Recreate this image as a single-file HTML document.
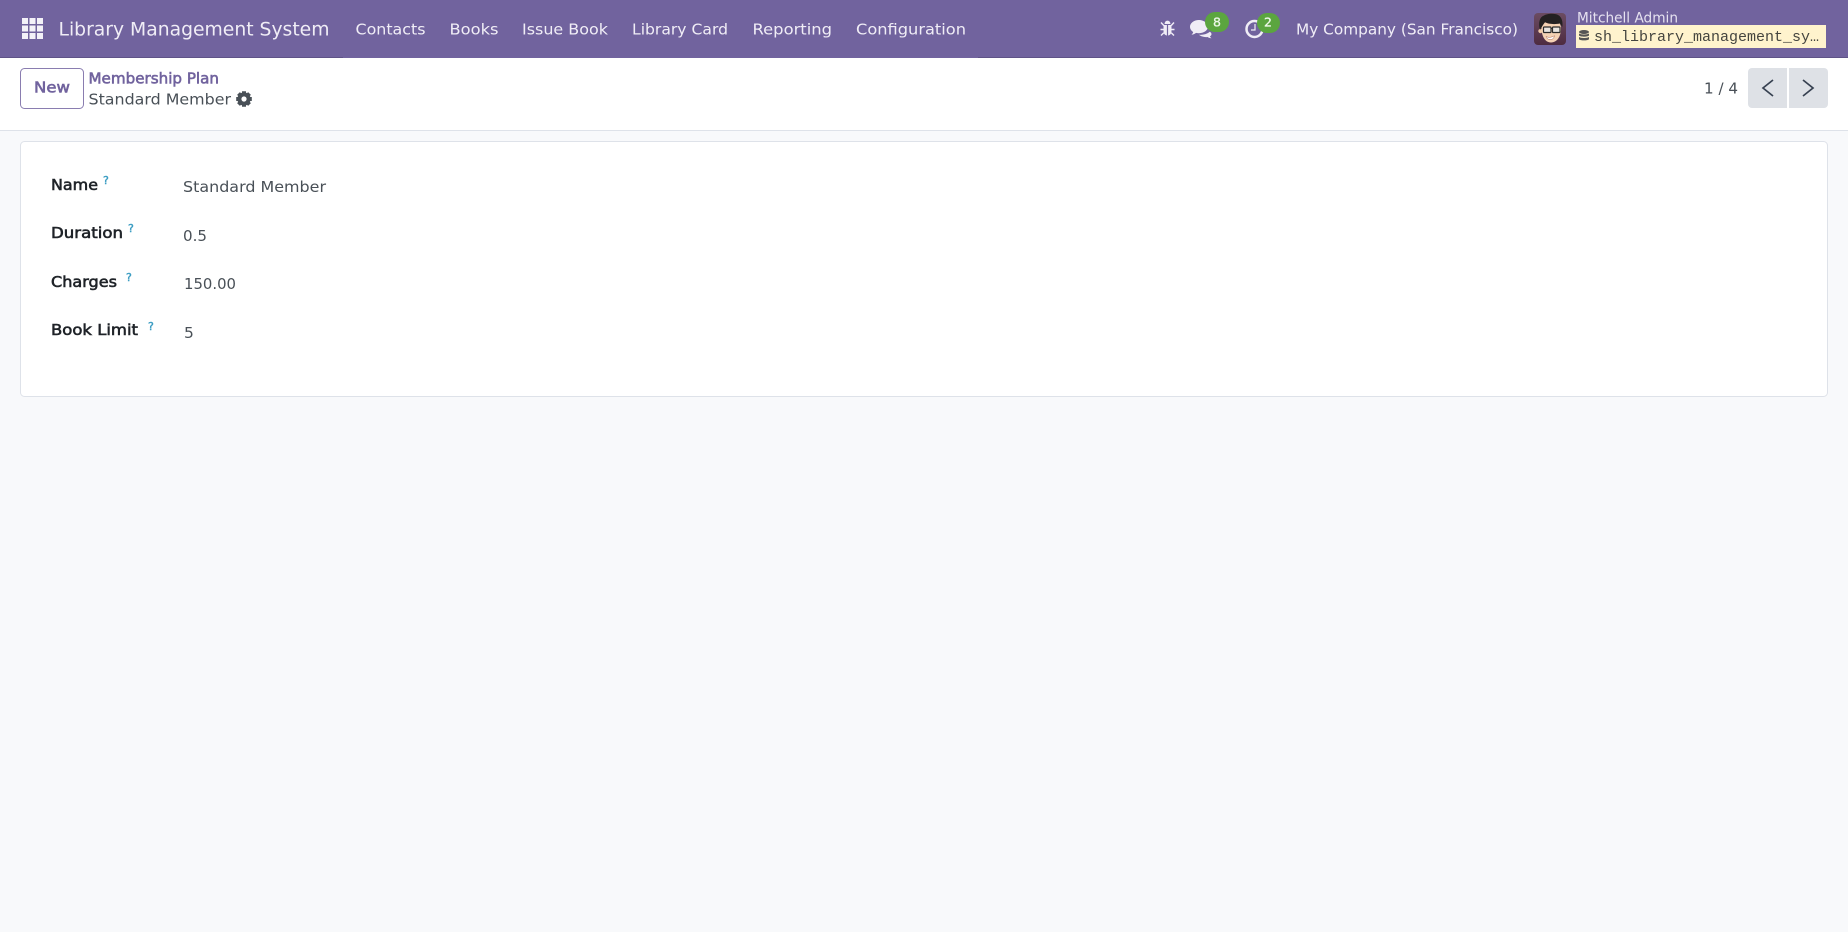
<!DOCTYPE html>
<html lang="en">
<head>
<meta charset="utf-8">
<title>Membership Plan</title>
<style>
html,body{margin:0;padding:0;width:1848px;height:932px;overflow:hidden;background:#f8f9fb}
svg{display:block;position:absolute;left:0;top:0}
text{font-family:"DejaVu Sans","Liberation Sans",sans-serif;white-space:pre}
.nav{fill:#f0edf6;font-size:15.5px}
.lab{fill:#1f2328;font-size:15.5px;stroke:#1f2328;stroke-width:.6px}
.val{fill:#495057;font-size:15.5px}
.q{fill:#3a9cc2;font-size:11px;stroke:#3a9cc2;stroke-width:.4px}
</style>
</head>
<body>
<svg width="1848" height="932" viewBox="0 0 1848 932" xmlns="http://www.w3.org/2000/svg">
<rect width="1848" height="932" fill="#f8f9fb"/>
<!-- navbar -->
<rect width="1848" height="58" fill="#71639e"/>
<rect y="57" width="343" height="1" fill="#5f5387"/>
<rect x="978" y="57" width="870" height="1" fill="#5f5387"/>
<!-- apps icon -->
<g fill="#f3f1f8">
<rect x="22" y="18" width="6" height="6"/><rect x="29.500" y="18" width="6" height="6"/><rect x="37" y="18" width="6" height="6"/>
<rect x="22" y="25.500" width="6" height="6"/><rect x="29.500" y="25.500" width="6" height="6"/><rect x="37" y="25.500" width="6" height="6"/>
<rect x="22" y="33" width="6" height="6"/><rect x="29.500" y="33" width="6" height="6"/><rect x="37" y="33" width="6" height="6"/>
</g>
<text x="58.500" y="35.500" fill="#f0edf6" font-size="18.800" textLength="271" lengthAdjust="spacingAndGlyphs">Library Management System</text>
<text class="nav" x="355.500" y="34.500" textLength="70" lengthAdjust="spacingAndGlyphs">Contacts</text>
<text class="nav" x="449.500" y="34.500" textLength="49" lengthAdjust="spacingAndGlyphs">Books</text>
<text class="nav" x="522" y="34.500" textLength="86" lengthAdjust="spacingAndGlyphs">Issue Book</text>
<text class="nav" x="632" y="34.500" textLength="96" lengthAdjust="spacingAndGlyphs">Library Card</text>
<text class="nav" x="752.500" y="34.500" textLength="79.500" lengthAdjust="spacingAndGlyphs">Reporting</text>
<text class="nav" x="856" y="34.500" textLength="110" lengthAdjust="spacingAndGlyphs">Configuration</text>
<!-- bug -->
<g fill="#f0edf6">
<path d="M1164.500 24a3 3.400 0 0 1 6 0z"/>
<path d="M1163.500 25h3.400v10.500c-2-.3-3.400-2-3.400-4.500zM1168.100 25h3.400v6c0 2.500-1.400 4.200-3.400 4.500z"/>
</g>
<path d="M1161 22.500l2.800 3M1174 22.500l-2.800 3M1160.500 29.500h3.500M1174.500 29.500h-3.500M1161 35.500l2.800-2.800M1174 35.500l-2.800-2.800" stroke="#f0edf6" stroke-width="1.400" fill="none"/>
<!-- chats -->
<path d="M1199 20c-5 0-9 3-9 6.800 0 2.200 1.300 4 3.200 5.300-.3 1-.9 1.800-1.700 2.600 1.800-.2 3.400-.8 4.600-1.800 1 .2 2 .3 2.900.3 5 0 9-3 9-6.400s-4-6.800-9-6.800z" fill="#f0edf6"/>
<path d="M1199 34.800c3.800.3 8-.6 10.800-3 1 .6 1.700 1.400 1.700 2.300 0 .9-.6 1.700-1.500 2.200.2.800.7 1.400 1.500 2-1.700-.1-3-.5-3.900-1.300-3.500.4-6.900-.6-8.600-2.200z" fill="#f0edf6"/>
<rect x="1205" y="12" width="24" height="20" rx="10" fill="#5ba53f"/>
<text x="1217" y="26.500" fill="#eef7ea" stroke="#eef7ea" stroke-width=".3" font-size="12.500" text-anchor="middle">8</text>
<!-- clock -->
<circle cx="1254.500" cy="29" r="8" fill="none" stroke="#f0edf6" stroke-width="2.500"/>
<path d="M1255 24v6h-4" fill="none" stroke="#f0edf6" stroke-width="1.200"/>
<rect x="1257" y="13" width="23" height="20" rx="10" fill="#5ba53f"/>
<text x="1268" y="26.500" fill="#eef7ea" stroke="#eef7ea" stroke-width=".3" font-size="12.500" text-anchor="middle">2</text>
<text class="nav" x="1296" y="34.500" textLength="222" lengthAdjust="spacingAndGlyphs">My Company (San Francisco)</text>
<!-- avatar -->
<defs><linearGradient id="av" x1="0" y1="0" x2="0" y2="1"><stop offset="0" stop-color="#6b4c62"/><stop offset="1" stop-color="#4e2c40"/></linearGradient></defs>
<rect x="1534" y="13" width="32" height="32" rx="4" fill="url(#av)"/>
<circle cx="1540.500" cy="31" r="2.200" fill="#f0c8a6"/>
<path d="M1541.500 27c-.3 8 3 15.500 9.500 15.500 6.500-.3 10.300-6.500 10-15.500l-2-6-14 .5z" fill="#f5d2b4"/>
<path d="M1540 30c-2-7-.5-13 4-14.500 3-2 11-2.500 14.500-.3 3.500 2.200 4.500 6.800 3.800 11.800l-2.300-3.500c-4.500 1-11.500.8-15-1.200-1.500 1.800-2.800 4-5 7.700z" fill="#242122"/>
<rect x="1543.500" y="27" width="7.500" height="5.500" rx=".8" fill="#e9e4df" stroke="#2a2a2a" stroke-width="1.200"/>
<rect x="1552.500" y="27" width="7.500" height="5.500" rx=".8" fill="#e9e4df" stroke="#2a2a2a" stroke-width="1.200"/>
<path d="M1551 28.500h1.500" stroke="#2a2a2a" stroke-width="1"/>
<path d="M1546 36.500c2.500 1.300 5.500 1 8.500-.8-.5 2.800-2 3.800-4.200 3.800s-3.700-1-4.300-3z" fill="#fff" stroke="#a5604a" stroke-width=".5"/>
<text x="1577" y="22.500" fill="#e6e2f0" font-size="14" textLength="101" lengthAdjust="spacingAndGlyphs">Mitchell Admin</text>
<rect x="1576" y="25" width="250" height="23" fill="#fff3cd"/>
<g fill="#555"><ellipse cx="1584" cy="32" rx="5" ry="2"/>
<path d="M1579 33.500c1.500 1.300 8.500 1.300 10 0v2c-1.500 1.600-8.500 1.600-10 0zM1579 37c1.500 1.300 8.500 1.300 10 0v2.200c-1.500 1.600-8.500 1.600-10 0z"/>
</g>
<text x="1594" y="41" fill="#45453f" font-size="15" style="font-family:'Liberation Mono',monospace" textLength="225" lengthAdjust="spacingAndGlyphs">sh_library_management_sy…</text>
<!-- control panel -->
<rect y="58" width="1848" height="72" fill="#fff"/>
<rect y="130" width="1848" height="1" fill="#dee2e9"/>
<rect x="20.500" y="68.500" width="63" height="40" rx="4" fill="#fff" stroke="#8a7db0"/>
<text x="34" y="92.500" fill="#71639e" stroke="#71639e" stroke-width=".6" font-size="15.500" textLength="36" lengthAdjust="spacingAndGlyphs">New</text>
<text x="88.500" y="83.500" fill="#71639e" stroke="#71639e" stroke-width=".6" font-size="15.500" textLength="130.500" lengthAdjust="spacingAndGlyphs">Membership Plan</text>
<text class="val" x="88.500" y="104.500" textLength="142.500" lengthAdjust="spacingAndGlyphs">Standard Member</text>
<!-- gear -->
<g transform="translate(244 99)">
<circle r="4.600" fill="none" stroke="#495057" stroke-width="4"/>
<path d="M-2-7.800h4v3h-4zM-2 4.800h4v3h-4zM-7.800-2h3v4h-3zM4.800-2h3v4h-3z" fill="#495057"/>
<path d="M-2-7.800h4v3h-4zM-2 4.800h4v3h-4zM-7.800-2h3v4h-3zM4.800-2h3v4h-3z" fill="#495057" transform="rotate(45)"/>
</g>
<!-- pager -->
<text x="1704" y="93.500" fill="#495057" font-size="15.500" textLength="34" lengthAdjust="spacingAndGlyphs">1 / 4</text>
<path d="M1752 68h35v40h-35a4 4 0 0 1-4-4v-32a4 4 0 0 1 4-4z" fill="#dee1e6"/>
<path d="M1789 68h35a4 4 0 0 1 4 4v32a4 4 0 0 1-4 4h-35z" fill="#dee1e6"/>
<path d="M1773 80l-10 8 10 8" fill="none" stroke="#374151" stroke-width="1.700"/>
<path d="M1803 80l10 8-10 8" fill="none" stroke="#374151" stroke-width="1.700"/>
<!-- card -->
<rect x="20.500" y="141.500" width="1807" height="255" rx="4" fill="#fff" stroke="#dee2e9"/>
<text class="lab" x="51" y="190" textLength="47" lengthAdjust="spacingAndGlyphs">Name</text>
<text class="q" x="103" y="184">?</text>
<text class="val" x="183" y="192" textLength="143" lengthAdjust="spacingAndGlyphs">Standard Member</text>
<text class="lab" x="51" y="238" textLength="72" lengthAdjust="spacingAndGlyphs">Duration</text>
<text class="q" x="128" y="232">?</text>
<text class="val" x="183" y="241" textLength="24" lengthAdjust="spacingAndGlyphs">0.5</text>
<text class="lab" x="51" y="287" textLength="66" lengthAdjust="spacingAndGlyphs">Charges</text>
<text class="q" x="126" y="281">?</text>
<text class="val" x="184" y="289" textLength="52" lengthAdjust="spacingAndGlyphs">150.00</text>
<text class="lab" x="51" y="335" textLength="87" lengthAdjust="spacingAndGlyphs">Book Limit</text>
<text class="q" x="148" y="330">?</text>
<text class="val" x="184" y="338">5</text>
</svg>
</body>
</html>
